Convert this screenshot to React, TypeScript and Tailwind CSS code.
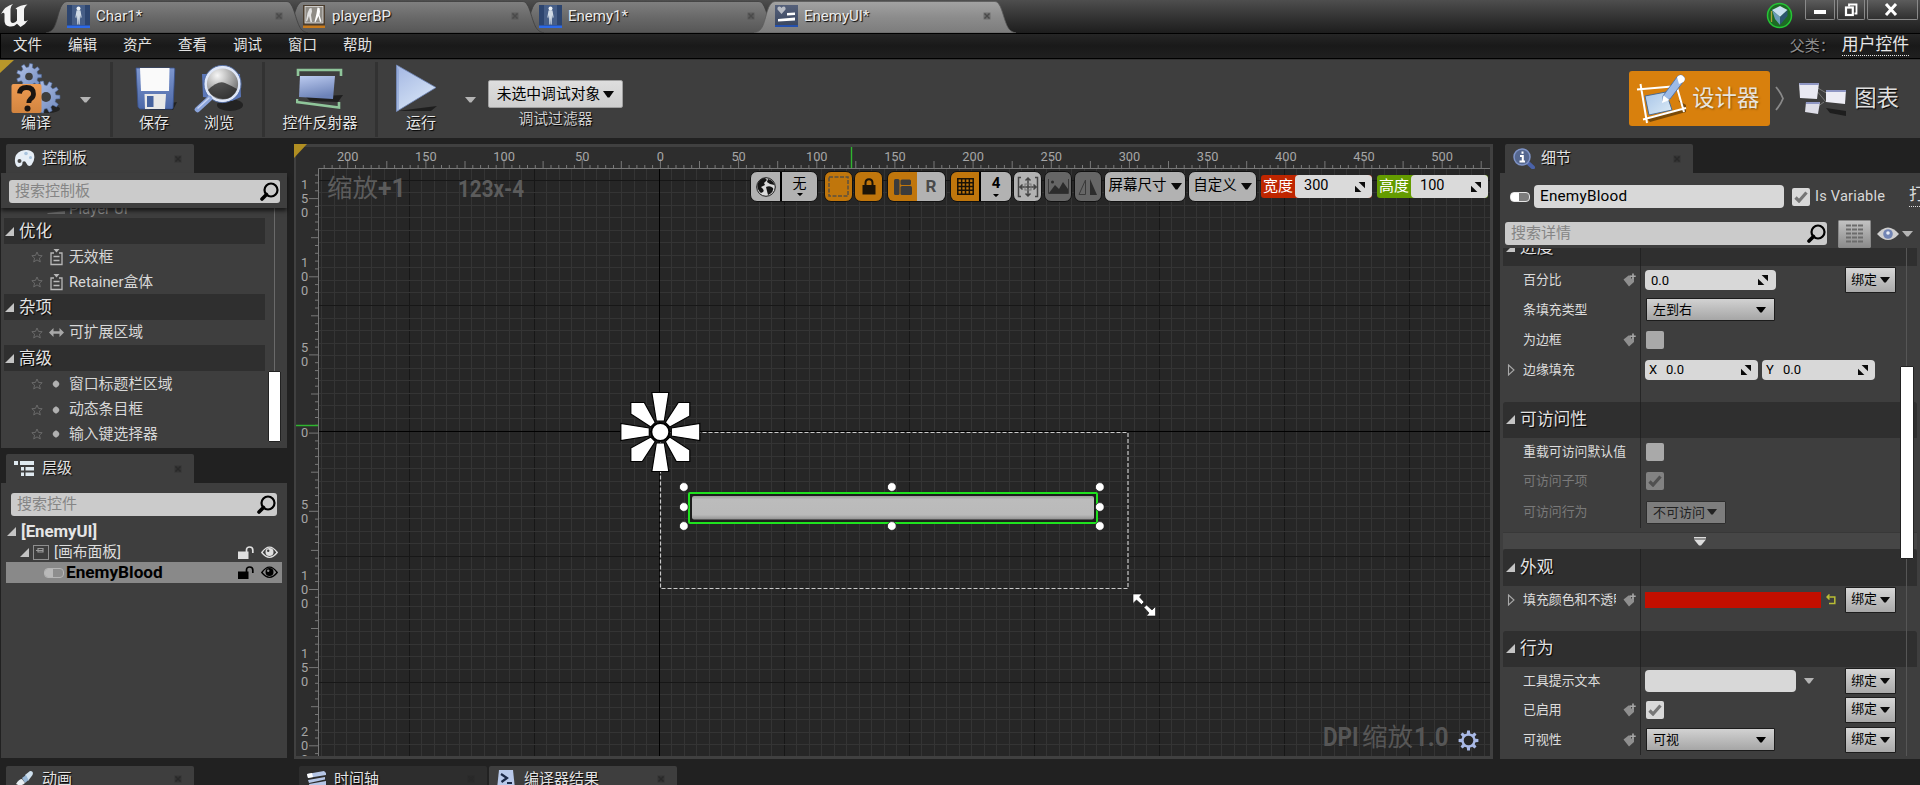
import type { ReactNode } from 'react';

const SHADOW = '[text-shadow:1px_1px_1px_#000]';

/* ---------- small shared pieces ---------- */

function Caret({ className = 'text-[#0a0a0a]', w = 10, h = 6 }: { className?: string; w?: number; h?: number }) {
  return (
    <svg width={w} height={h} viewBox="0 0 10 6" preserveAspectRatio="none" className={`shrink-0 ${className}`}>
      <path d="M0 0H10L5.8 5.6H4.2Z" fill="currentColor" />
    </svg>
  );
}

function Expanded({ size = 9 }: { size?: number }) {
  return (
    <svg width={size} height={size} viewBox="0 0 9 9" className="shrink-0">
      <path d="M9 0V9H0Z" fill="#c4c4c4" />
    </svg>
  );
}

function Collapsed() {
  return (
    <svg width="8" height="12" viewBox="0 0 8 12" className="shrink-0">
      <path d="M1.500 1L7 6L1.500 11Z" fill="none" stroke="#a8a8a8" strokeWidth="1.1" />
    </svg>
  );
}

function CloseX({ className = 'text-[#292929]' }: { className?: string }) {
  return (
    <svg width="8" height="8" viewBox="0 0 8 8" className={`shrink-0 ${className}`}>
      <rect x="0.5" y="0.5" width="7" height="7" fill="currentColor" opacity="0.45" />
      <path d="M1.5 1.5L6.5 6.5M6.5 1.5L1.5 6.5" stroke="currentColor" strokeWidth="1.4" />
    </svg>
  );
}

function SearchIcon() {
  return (
    <svg width="19" height="19" viewBox="0 0 19 19" className="shrink-0">
      <circle cx="11" cy="8" r="6.5" fill="none" stroke="#000" strokeWidth="2.2" />
      <path d="M6.5 12.5L2 17" stroke="#000" strokeWidth="3.6" strokeLinecap="round" />
    </svg>
  );
}

function SearchBox({ label, className }: { label: string; className: string }) {
  return (
    <div className={`flex h-[23px] items-center justify-between rounded-[3px] bg-[#cbcbcb] pl-[6px] pr-px ${className}`}>
      <span className="text-[15px] leading-none text-[#858585]">{label}</span>
      <SearchIcon />
    </div>
  );
}

function SpinIcon({ s = 11 }: { s?: number }) {
  return (
    <svg width={s} height={s} viewBox="0 0 11 11" className="shrink-0">
      <path d="M4 0H11V7Z" fill="#0a0a0a" />
      <path d="M0 4V11H7Z" fill="#0a0a0a" />
    </svg>
  );
}

function PanelTab({ icon, label, className = '' }: { icon: ReactNode; label: string; className?: string }) {
  return (
    <div className={`flex w-[188px] shrink-0 items-center rounded-t-[2px] pl-2 pr-3 ${className}`}>
      <div className="flex w-[28px] shrink-0 items-center">{icon}</div>
      <span className={`flex-1 text-[15px] leading-none text-[#e2e2e2] ${SHADOW}`}>{label}</span>
      <CloseX />
    </div>
  );
}

/* ---------- title bar ---------- */

function PersonIcon() {
  return (
    <svg width="23" height="23" viewBox="0 0 23 23">
      <rect width="23" height="23" fill="#2d456f" />
      <rect x="5" width="13" height="20" fill="#516a92" opacity="0.7" />
      <rect y="20.5" width="23" height="2.5" fill="#2c69e8" />
      <circle cx="11.5" cy="3.4" r="2" fill="#eef2f6" />
      <path d="M9.500 5.500Q11.500 4.600 13.500 5.500L14.600 12L13.800 13.500L13 10L12.700 19.500H11.800L11.500 13L11.200 19.500H10.300L10 10L9.200 13.500L8.400 12Z" fill="#cfd9e4" />
    </svg>
  );
}

function PlayerIcon() {
  return (
    <svg width="22" height="23" viewBox="0 0 22 23">
      <rect width="22" height="23" fill="#4a3d2e" />
      <rect x="2" y="1.500" width="18" height="16.500" fill="#8f8c86" stroke="#e4e4e4" strokeWidth="0.800" />
      <rect y="20.500" width="22" height="2.500" fill="#c77a1c" />
      <path d="M6.500 3.500L8.500 3L9 6.500L8 10L9 17H7.500L6 11L4 16.500L3 16L4.500 8Z" fill="#e2e2e2" />
      <path d="M14.500 2.500L16.500 3L17 6.500L16.500 10L18.500 16.500L17 17L15.500 11L12.500 17H11.500L13.500 8.500Z" fill="#fff" />
    </svg>
  );
}

function WidgetIcon() {
  return (
    <svg width="23" height="22" viewBox="0 0 23 22">
      <defs>
        <linearGradient id="wi" x1="0" y1="0" x2="0" y2="1">
          <stop offset="0" stopColor="#55607a" />
          <stop offset="1" stopColor="#39465f" />
        </linearGradient>
      </defs>
      <rect width="23" height="22" fill="url(#wi)" />
      <rect y="20" width="23" height="2" fill="#2450ad" />
      <path d="M6.500 9L2.500 4.500Q2 1.500 4.500 1.500Q6 1.500 6.500 3Q7 1.500 8.800 1.500Q11 1.800 10.500 4.500Z" fill="#b9bdc5" />
      <path d="M12 8L20 7.500V10L12 10.500Z" fill="#fff" />
      <path d="M3 14L20 12.500V15.500L3 16.500Z" fill="#fff" />
    </svg>
  );
}

function AppTab({ id, icon, label, active, z }: { id: string; icon: ReactNode; label: string; active?: boolean; z: string }) {
  return (
    <div className={`relative flex h-[33px] w-[236px] shrink-0 items-center ${z}`}>
      <svg width="262" height="33" viewBox="0 0 262 33" className="absolute left-0 top-0">
        <defs>
          <linearGradient id={id} x1="0" y1="0" x2="0" y2="1">
            <stop offset="0" stopColor={active ? '#a3a3a3' : '#808080'} />
            <stop offset="0.5" stopColor={active ? '#8c8c8c' : '#696969'} />
            <stop offset="1" stopColor={active ? '#7c7c7c' : '#565656'} />
          </linearGradient>
        </defs>
        <path
          d="M0 33C8 31 9 27 13 12Q16 1.500 21 1.500H241Q245 1.500 248 11C253 27 254 31 262 33Z"
          fill={`url(#${id})`}
          stroke={active ? '#5c5c5c' : '#3d3d3d'}
          strokeWidth="0.800"
        />
      </svg>
      <div className="relative flex w-full items-center pb-[1px] pl-[21px] pr-0">
        <div className="w-[29px] shrink-0">{icon}</div>
        <span className={`flex-1 whitespace-nowrap text-[15px] leading-none text-[#ececec] ${SHADOW}`}>{label}</span>
        <CloseX className="-mr-px text-[#4a4a4a]" />
      </div>
    </div>
  );
}

function TitleBar() {
  return (
    <div className="flex h-[33px] w-full bg-linear-to-b from-[#4e4e4e] to-[#1d1d1d]">
      <div className="w-[46px] shrink-0 pt-[2px]">
        <svg width="31" height="27" viewBox="0 0 31 27">
          <path
            d="M1 12Q5 4 13 2Q10.500 4 10.500 7V18Q10.500 21 13 21Q15.500 20.500 17 18.500V8Q17 6.500 15.500 6.500Q20 3 27.500 2.500Q24 5 24 8V18Q24 20.500 28 18Q25.500 22.500 20.500 25L17 21.800Q14 25.200 9.500 24.500Q4 23.500 4.500 18V12Q4 9.500 1 12Z"
            fill="#f4f4f4"
          />
        </svg>
      </div>
      <AppTab id="ta" icon={<PersonIcon />} label="Char1*" z="z-[3]" />
      <AppTab id="tb" icon={<PlayerIcon />} label="playerBP" z="z-[2]" />
      <AppTab id="tc" icon={<PersonIcon />} label="Enemy1*" z="z-[1]" />
      <AppTab id="td" icon={<WidgetIcon />} label="EnemyUI*" active z="z-[4]" />
      <div className="flex-1" />
      <svg width="27" height="27" viewBox="0 0 27 27" className="mr-3 mt-[2px]">
        <circle cx="13.500" cy="13.500" r="12" fill="#1d6a24" stroke="#25c535" strokeWidth="1.500" />
        <path d="M6 8L14 4L21.500 8L14 15Z" fill="#c9dff0" />
        <path d="M14 15L21.500 8V14L14 23Z" fill="#2d5470" />
        <path d="M6 8L14 15V23L9 17Z" fill="#6b9bb8" />
        <path d="M5.500 9V20" stroke="#a8a13a" strokeWidth="1.300" />
      </svg>
      <div className="flex h-5 gap-[2px] pr-[2px]">
        <div className="flex w-[30px] items-center justify-center rounded-b-[2px] border border-t-0 border-[#8a8a8a] bg-linear-to-b from-[#5c5c5c] to-[#303030]">
          <div className="mt-1 h-1 w-3 bg-white" />
        </div>
        <div className="flex w-[28px] items-center justify-center rounded-b-[2px] border border-t-0 border-[#8a8a8a] bg-linear-to-b from-[#5c5c5c] to-[#303030]">
          <svg width="14" height="14" viewBox="0 0 14 14">
            <path d="M5 3.500V1.500H12.500V10.500H10.500" fill="none" stroke="#fff" strokeWidth="1.800" />
            <rect x="2" y="4.500" width="6.800" height="7.500" fill="none" stroke="#fff" strokeWidth="2.200" />
          </svg>
        </div>
        <div className="flex w-[51px] items-center justify-center rounded-b-[2px] border border-t-0 border-[#8a8a8a] bg-linear-to-b from-[#5c5c5c] to-[#303030] pr-1">
          <svg width="14" height="13" viewBox="0 0 14 13">
            <path d="M2 1L12 12M12 1L2 12" stroke="#fff" strokeWidth="3" />
          </svg>
        </div>
      </div>
    </div>
  );
}

function MenuBar() {
  const items = ['文件', '编辑', '资产', '查看', '调试', '窗口', '帮助'];
  return (
    <div className="flex h-[26px] items-center border-y border-l border-black bg-linear-to-b from-[#262626] via-[#191919] to-[#1f1f1f] pl-[12px] pr-[11px]">
      <div className="flex flex-1 gap-[25.5px] pt-px">
        {items.map((m) => (
          <span key={m} className="w-[29.5px] whitespace-nowrap text-[14.5px] leading-none text-[#e4e4e4]">{m}</span>
        ))}
      </div>
      <span className={`text-[15px] leading-none text-[#8c8c8c] ${SHADOW}`}>父类：</span>
      <span className="ml-[7px] border-b border-dotted border-[#e8e8e8] pb-[2px] text-[16.8px] leading-none text-[#e8e8e8]">用户控件</span>
    </div>
  );
}

/* ---------- toolbar ---------- */

function gearPath(cx: number, cy: number, ro: number, ri: number, n: number) {
  let d = '';
  for (let i = 0; i < n; i++) {
    const a = (i / n) * Math.PI * 2;
    const s = (Math.PI * 2) / n;
    const pts: [number, number][] = [
      [a - s * 0.3, ri],
      [a - s * 0.18, ro],
      [a + s * 0.18, ro],
      [a + s * 0.3, ri],
    ];
    pts.forEach(([t, r], k) => {
      d += `${i === 0 && k === 0 ? 'M' : 'L'}${(cx + Math.cos(t) * r).toFixed(2)} ${(cy + Math.sin(t) * r).toFixed(2)}`;
    });
  }
  return d + 'Z';
}

function CompileIcon() {
  return (
    <svg width="50" height="51" viewBox="0 0 50 51">
      <defs>
        <linearGradient id="cg" x1="0" y1="0" x2="1" y2="1">
          <stop offset="0" stopColor="#b4c4ea" />
          <stop offset="1" stopColor="#7089bd" />
        </linearGradient>
        <linearGradient id="co" x1="0" y1="0" x2="0" y2="1">
          <stop offset="0" stopColor="#ee9b52" />
          <stop offset="1" stopColor="#d2843f" />
        </linearGradient>
      </defs>
      <ellipse cx="37" cy="46" rx="12" ry="4" fill="#222" />
      <path d={gearPath(18, 13, 12.5, 9, 9)} fill="url(#cg)" stroke="#5470a6" strokeWidth="0.600" />
      <circle cx="18" cy="13.500" r="3.800" fill="#3e3e3e" />
      <path d={gearPath(33, 34, 16, 12, 11)} fill="url(#cg)" stroke="#5470a6" strokeWidth="0.600" />
      <circle cx="35" cy="34" r="5" fill="#3e3e3e" />
      <rect x="0.500" y="21" width="30" height="29" rx="2" fill="url(#co)" />
      <path d="M8.500 30.500Q9 24.500 15.500 24.500Q22.500 24.500 22.500 31Q22.500 34 19.500 36Q17.800 37.500 17.800 40" fill="none" stroke="#1b1410" strokeWidth="4.800" />
      <circle cx="16.500" cy="45.500" r="3" fill="#1b1410" />
    </svg>
  );
}

function SaveIcon() {
  return (
    <svg width="44" height="46" viewBox="0 0 44 46">
      <defs>
        <linearGradient id="sg" x1="0" y1="0" x2="0" y2="1">
          <stop offset="0" stopColor="#7e97cf" />
          <stop offset="1" stopColor="#4c68a8" />
        </linearGradient>
      </defs>
      <path d="M20 40L42 36L38 44H14Z" fill="#222" />
      <path d="M1 2H39Q40 2 39.800 4L38 42Q38 43 36.500 43H5L3 41Z" fill="url(#sg)" stroke="#39528c" strokeWidth="0.800" />
      <path d="M5 2H34.500L34 25H6Z" fill="#fafafa" />
      <path d="M9.500 28H31L30 43H10Z" fill="#e8e8e8" />
      <rect x="12" y="30" width="6.500" height="11" fill="#46639f" />
    </svg>
  );
}

function BrowseIcon() {
  return (
    <svg width="50" height="48" viewBox="0 0 50 48">
      <defs>
        <radialGradient id="bg1" cx="0.35" cy="0.25" r="0.9">
          <stop offset="0" stopColor="#f6f6f6" />
          <stop offset="0.55" stopColor="#9b9b9b" />
          <stop offset="1" stopColor="#4c4c4c" />
        </radialGradient>
      </defs>
      <ellipse cx="36" cy="40" rx="13" ry="6" fill="#232323" />
      <path d="M8 9H46L47 32L38 36L9 32Z" fill="#5a76b8" />
      <circle cx="28.500" cy="19" r="17" fill="url(#bg1)" stroke="#dfe7f8" strokeWidth="2.800" />
      <path d="M14 25Q24 15 31 18T43 24Q39 34 29 34Q18 33 14 25Z" fill="#1c1c1c" opacity="0.700" />
      <circle cx="28.500" cy="19" r="18.600" fill="none" stroke="#536ea6" strokeWidth="0.900" />
      <path d="M15.500 33.500L3.500 44.500" stroke="#8aa3da" strokeWidth="5.500" strokeLinecap="round" />
      <path d="M15 33L4 43" stroke="#c7d4f2" strokeWidth="1.500" strokeLinecap="round" />
    </svg>
  );
}

function ReflectorIcon() {
  return (
    <svg width="48" height="42" viewBox="0 0 48 42">
      <defs>
        <linearGradient id="rg" x1="0" y1="0" x2="0.300" y2="1">
          <stop offset="0" stopColor="#bccbf0" />
          <stop offset="1" stopColor="#6d83b8" />
        </linearGradient>
      </defs>
      <path d="M10 29L47 27L42 34L14 33Z" fill="#1f1f1f" />
      <path d="M2 8V2H45V8" fill="none" stroke="#8fc59a" strokeWidth="2.600" />
      <path d="M4 8H39L37 31L3 29Z" fill="url(#rg)" />
      <path d="M1 31V34L43 39.500V34" fill="none" stroke="#8fc59a" strokeWidth="2.600" />
    </svg>
  );
}

function PlayIcon() {
  return (
    <svg width="44" height="50" viewBox="0 0 44 50">
      <defs>
        <linearGradient id="pg" x1="0" y1="0" x2="0.600" y2="1">
          <stop offset="0" stopColor="#a3b6e2" />
          <stop offset="1" stopColor="#d6e4f6" />
        </linearGradient>
      </defs>
      <path d="M2 47L42 42L36 47Z" fill="#1e1e1e" />
      <path d="M1.500 1L41 23.500L1.500 47.500Z" fill="url(#pg)" stroke="#6d84b5" strokeWidth="0.800" />
      <path d="M1.500 1V47.500L4 46V6Z" fill="#8098cc" opacity="0.500" />
    </svg>
  );
}

function DesignerIcon() {
  return (
    <svg width="51" height="50" viewBox="0 0 51 50">
      <defs>
        <linearGradient id="dg" x1="0" y1="0" x2="1" y2="1">
          <stop offset="0" stopColor="#a7c4e8" />
          <stop offset="1" stopColor="#dcebf6" />
        </linearGradient>
      </defs>
      <path d="M10 44L48 34L42 26L50 31V38L14 48Z" fill="#7a4a08" />
      <path d="M9 22L30 18L36 36L13 41Z" fill="url(#dg)" stroke="#3d6391" strokeWidth="0.900" />
      <path d="M1 15.500L36 12.500M4.500 10L11 49M40 10L48 38M7 45.500L50 34" stroke="#fff" strokeWidth="2" fill="none" />
      <path d="M27 22L41 3Q45 -1 48 3Q50 5 47 8L34 25L27 27Z" fill="#9dbbe8" stroke="#4d70a8" strokeWidth="0.900" />
      <path d="M41 3Q45 -1 48 3Q50 5 47.500 8L43 10Z" fill="#fff" />
      <path d="M26 29L27.500 21.500L33.500 26Z" fill="#fff" />
    </svg>
  );
}

function GraphIcon() {
  return (
    <svg width="49" height="34" viewBox="0 0 49 34">
      <path d="M28 26L48 29V34L32 31Z" fill="#1e1e1e" />
      <path d="M18 5L30 12M26 20L16 27M18 8L28 20" stroke="#777" strokeWidth="1" />
      <path d="M1 1L21 1L19 17L2 16Z" fill="#e9e9f2" />
      <path d="M1 1L21 1L20.700 3L1.500 3Z" fill="#8f97c4" />
      <path d="M28 8L48 8L47 22L28 20Z" fill="#ececf4" />
      <path d="M28 8L48 8L48 10L28 10Z" fill="#8f97c4" />
      <path d="M8 20L22 20L20 32L7 30Z" fill="#dedee8" />
      <path d="M8 20L22 20L21.500 22L8 22Z" fill="#8f97c4" />
    </svg>
  );
}

function ToolButton({ icon, label, className }: { icon: ReactNode; label: string; className: string }) {
  return (
    <div className={`flex shrink-0 flex-col items-center ${className}`}>
      <div className="flex h-[53px] items-center justify-center">{icon}</div>
      <span className={`-mt-px whitespace-nowrap text-[15px] leading-[19px] text-[#e6e6e6] ${SHADOW}`}>{label}</span>
    </div>
  );
}

function ToolSeparator() {
  return <div className="h-[75px] w-[3px] shrink-0 self-start bg-[#323232]" />;
}

function Toolbar() {
  return (
    <div className="relative flex h-[79px] border-t border-[#333] bg-[#3e3e3e] pt-[2px]">
      <svg width="14" height="13" viewBox="0 0 14 13" className="absolute left-0 top-0">
        <path d="M0 0H14L0 13Z" fill="#b8972a" />
      </svg>
      <ToolButton icon={<CompileIcon />} label="编译" className="ml-[11px] w-[50px] items-start [&>span]:ml-[10px]" />
      <div className="w-[49px] shrink-0 pl-[19px] pt-[35px]">
        <Caret className="text-[#b4b4b4]" w={11} h={6} />
      </div>
      <ToolSeparator />
      <ToolButton icon={<SaveIcon />} label="保存" className="ml-[22px] w-[44px] [&>span]:-ml-[6px]" />
      <ToolButton icon={<BrowseIcon />} label="浏览" className="ml-[15px] w-[50px]" />
      <div className="w-[18px]" />
      <ToolSeparator />
      <ToolButton icon={<ReflectorIcon />} label="控件反射器" className="ml-[15px] w-[80px]" />
      <div className="w-[15px]" />
      <ToolSeparator />
      <ToolButton icon={<PlayIcon />} label="运行" className="ml-[18px] w-[50px] [&>div]:mr-[9px]" />
      <div className="w-[42px] shrink-0 pl-[19px] pt-[35px]">
        <Caret className="text-[#b4b4b4]" w={11} h={6} />
      </div>
      <div className="flex shrink-0 flex-col items-center pt-[18px]">
        <div className="flex h-[28px] w-[135px] items-center justify-center gap-[3px] rounded-[2px] border border-[#a0a0a0] bg-linear-to-b from-[#dedede] to-[#cfcfcf]">
          <span className="text-[14.8px] leading-none text-black">未选中调试对象</span>
          <Caret w={11} h={7} />
        </div>
        <span className="mt-[4px] text-[14.8px] leading-none text-[#cfcfcf] [text-shadow:1px_1px_1px_#000]">调试过滤器</span>
      </div>
      <div className="flex-1" />
      <div className="mt-[9px] flex h-[55px] w-[141px] items-center rounded-[3px] bg-[#d8800d] pl-[7px] [text-shadow:1px_1px_2px_#8a5208]">
        <DesignerIcon />
        <span className="ml-[5px] text-[22.4px] leading-none text-[#e8e4de]">设计器</span>
      </div>
      <svg width="10" height="25" viewBox="0 0 10 25" className="ml-[5px] mt-[24px]">
        <path d="M1 1Q6 7 8 12.500Q6 18 1 24" fill="none" stroke="#8a8a8a" strokeWidth="1.800" />
      </svg>
      <div className="mr-[21px] mt-[9px] flex h-[55px] items-center pl-[13px]">
        <GraphIcon />
        <span className={`ml-[7px] text-[22.4px] leading-none text-[#dedede] ${SHADOW}`}>图表</span>
      </div>
    </div>
  );
}

/* ---------- left column ---------- */

function PaletteHeader({ label, className }: { label: string; className: string }) {
  return (
    <div className={`flex w-[261px] shrink-0 items-center gap-[5px] bg-[#2f2f2f] pl-px ${className}`}>
      <Expanded />
      <span className={`pt-[2px] text-[16.5px] leading-none text-[#e2e2e2] ${SHADOW}`}>{label}</span>
    </div>
  );
}

function Star() {
  return (
    <svg width="12" height="12" viewBox="0 0 12 12" className="shrink-0">
      <path d="M6 1L7.500 4.400L11.200 4.700L8.400 7.200L9.300 10.900L6 8.900L2.700 10.900L3.600 7.200L0.800 4.700L4.500 4.400Z" fill="none" stroke="#6e6e6e" strokeWidth="0.900" />
    </svg>
  );
}

function PaletteRow({ icon, label, className }: { icon: ReactNode; label: string; className: string }) {
  return (
    <div className={`flex shrink-0 items-center pl-[27px] ${className}`}>
      <Star />
      <div className="flex w-[26px] shrink-0 justify-center">{icon}</div>
      <span className="text-[14.8px] leading-none text-[#d8d8d8]">{label}</span>
    </div>
  );
}

function BoxIcon() {
  return (
    <svg width="13" height="17" viewBox="0 0 13 17">
      <path d="M3.500 0H9.500L6.500 3.500Z" fill="#b8b8b8" />
      <path d="M4 4H1V15.500H12V4H9M3.500 7.500H9.500M3.500 11.500H9.500" fill="none" stroke="#b8b8b8" strokeWidth="1.300" />
    </svg>
  );
}

function SpacerIcon() {
  return (
    <svg width="15" height="9" viewBox="0 0 15 9" className="shrink-0">
      <path d="M0 4.500L4.500 0V3.300H10.500V0L15 4.500L10.500 9V5.700H4.500V9Z" fill="#a8a8a8" />
    </svg>
  );
}

function Dot() {
  return (
    <svg width="8" height="8" viewBox="0 0 8 8">
      <path d="M4 0L7.600 4L4 8L0.400 4Z" fill="#b0b0b0" />
      <circle cx="4" cy="4" r="3" fill="#b0b0b0" />
    </svg>
  );
}

function Lock({ color }: { color: string }) {
  return (
    <svg width="16" height="13" viewBox="0 0 16 13" className="shrink-0">
      <rect x="0" y="5.500" width="10.500" height="7.500" fill={color} />
      <path d="M8.500 6V4Q8.500 1 11.700 1Q14.800 1 14.800 4V7" fill="none" stroke={color} strokeWidth="1.700" />
    </svg>
  );
}

function Eye({ color, hole }: { color: string; hole: string }) {
  return (
    <svg width="17" height="13" viewBox="0 0 17 13" className="shrink-0">
      <path d="M0.800 6.500Q8.500 -4.200 16.200 6.500Q8.500 16.200 0.800 6.500Z" fill="none" stroke={color} strokeWidth="1.400" />
      <circle cx="8.500" cy="6" r="4" fill={color} />
      <circle cx="7.200" cy="4.700" r="1.200" fill={hole} />
    </svg>
  );
}

function LeftColumn() {
  return (
    <div className="flex w-[286px] shrink-0 flex-col">
      {/* palette */}
      <div className="flex h-[29px] pl-[5px]">
        <PanelTab
          label="控制板"
          className="bg-[#3e3e3e]"
          icon={
            <svg width="21" height="19" viewBox="0 0 21 19">
              <path d="M1 13Q0 5 7 2Q15 -1 19.500 4Q22 10 17.500 16Q14 18.500 12.500 14.500Q11 11 8.500 13Q9 18 4 18Q1.500 17 1 13Z" fill="#e6eef6" />
              <circle cx="12" cy="4.500" r="1.800" fill="#a9c4de" />
              <circle cx="16.500" cy="8.500" r="1.500" fill="#a9c4de" />
              <circle cx="5.500" cy="12" r="2" fill="#4a4a4a" />
            </svg>
          }
        />
      </div>
      <div className="flex h-[275px] shrink-0 flex-col bg-[#3e3e3e]">
        <div className="z-[1] h-[35px] shrink-0 bg-[#3e3e3e] pl-2 pt-[7px] shadow-[0_3px_4px_rgba(0,0,0,0.6)]">
          <SearchBox label="搜索控制板" className="w-[271px]" />
        </div>
        <div className="flex flex-1 overflow-hidden pl-[3px]">
          <div className="flex w-[263px] flex-col">
            <div className="flex h-[10px] items-end overflow-hidden pl-[42px]">
              <svg width="20" height="8" viewBox="0 0 20 8" className="mb-[2px] shrink-0">
                <path d="M2 5L19 3V6H1Z" fill="#6a6a6a" />
              </svg>
              <span className="mb-px ml-[3px] text-[15px] leading-[15px] text-[#8a8a8a]">Player UI</span>
            </div>
            <PaletteHeader label="优化" className="h-[26px]" />
            <PaletteRow icon={<BoxIcon />} label="无效框" className="h-[26px]" />
            <PaletteRow icon={<BoxIcon />} label="Retainer盒体" className="h-[24px]" />
            <PaletteHeader label="杂项" className="h-[26px]" />
            <PaletteRow icon={<SpacerIcon />} label="可扩展区域" className="h-[25px]" />
            <PaletteHeader label="高级" className="h-[26px]" />
            <PaletteRow icon={<Dot />} label="窗口标题栏区域" className="h-[26px]" />
            <PaletteRow icon={<Dot />} label="动态条目框" className="h-[25px]" />
            <PaletteRow icon={<Dot />} label="输入键选择器" className="h-[24px]" />
          </div>
          <div className="flex w-[15px] flex-col items-center">
            <div className="h-[163px] w-px bg-[#6a6a6a]" />
            <div className="h-[71px] w-[13px] shrink-0 rounded-[1px] border border-[#222] bg-white" />
          </div>
        </div>
      </div>
      {/* hierarchy */}
      <div className="mt-[6px] flex h-[29px] shrink-0 pl-[5px]">
        <PanelTab
          label="层级"
          className="bg-[#3e3e3e]"
          icon={
            <svg width="21" height="17" viewBox="0 0 21 17">
              <path d="M0 1H4V5H0ZM6 1H20V5H6ZM7 7H10V10.500H7ZM11.500 7H20V10.500H11.500ZM7 12.500H10V16H7ZM11.500 12.500H20V16H11.500Z" fill="#dfe9ef" />
            </svg>
          }
        />
      </div>
      <div className="flex h-[275px] shrink-0 flex-col bg-[#3e3e3e] pt-[10px]">
        <SearchBox label="搜索控件" className="ml-[10px] w-[266px]" />
        <div className="mt-[3px] flex h-[24px] items-center gap-[5px] pl-[6px]">
          <Expanded />
          <span className="pt-px text-[16.8px] font-bold leading-none text-[#e6e6e6]">[EnemyUI]</span>
        </div>
        <div className="flex h-[19px] items-center pl-[19px] pr-[9px] pb-px">
          <Expanded />
          <svg width="16" height="15" viewBox="0 0 16 15" className="ml-[4px]">
            <rect x="0.500" y="0.500" width="15" height="14" fill="none" stroke="#8f8f8f" />
            <path d="M3 5.500H10M5 3.500H10V7H5Z" fill="none" stroke="#9a9a9a" strokeWidth="1.200" />
          </svg>
          <span className="ml-[5px] flex-1 text-[14.8px] leading-none text-[#dedede]">[画布面板]</span>
          <Lock color="#e0e0e0" />
          <div className="w-[7px]" />
          <Eye color="#e0e0e0" hole="#3e3e3e" />
        </div>
        <div className="ml-[5px] flex h-[21px] w-[276px] items-center bg-[#898989] pl-[38px] pr-[4px]">
          <div className="h-[10px] w-5 shrink-0 rounded-[4px] border border-[#b5b5b5] bg-[#8e8e8e]">
            <div className="h-full w-2 rounded-l-[3px] bg-[#b9b9b9]" />
          </div>
          <span className="ml-[2px] flex-1 text-[17.2px] font-bold leading-none text-black">EnemyBlood</span>
          <Lock color="#000" />
          <div className="w-[7px]" />
          <Eye color="#000" hole="#898989" />
        </div>
      </div>
      <div className="mt-2 flex h-[19px] shrink-0 overflow-hidden pl-[5px]">
        <PanelTab
          label="动画"
          className="h-[26px] bg-[#3e3e3e]"
          icon={
            <svg width="21" height="18" viewBox="0 0 21 18">
              <path d="M11 5L16 1Q20 1 18.500 5L14 11Z" fill="#cfe0ee" />
              <path d="M8 8L12 5L14.500 10L11 13Z" fill="#98b7d6" />
              <path d="M2 14Q5 9 8 9L11 13Q7 17 2 14Z" fill="#e8eef2" />
            </svg>
          }
        />
      </div>
    </div>
  );
}

/* ---------- designer canvas ---------- */

const OX = 660.4;
const OY = 433.1;
const U = 1.5635;

const VERT_LABELS: [string, number, number][] = [];
for (let k = -3; k <= 4; k++) {
  const s = String(Math.abs(k) * 50);
  const c = OY - 0.3 + k * 50 * U;
  [...s].forEach((ch, i) => VERT_LABELS.push([ch, c + (i - (s.length - 1) / 2) * 14, k]));
}

function Rulers() {
  const top: ReactNode[] = [];
  for (let u = -215; u <= 530; u += 5) {
    const x = OX + u * U;
    if (x < 320 || x > 1489) continue;
    const len = u % 50 === 0 ? 9 : u % 25 === 0 ? 7 : 3;
    top.push(<path key={`t${u}`} d={`M${x.toFixed(1)} 168V${168 - len}`} />);
  }
  const left: ReactNode[] = [];
  for (let u = -165; u <= 205; u += 5) {
    const y = OY + u * U;
    if (y < 170 || y > 755) continue;
    const len = u % 50 === 0 ? 9 : u % 25 === 0 ? 7 : 3;
    left.push(<path key={`l${u}`} d={`M318 ${y.toFixed(1)}H${318 - len}`} />);
  }
  const labels: ReactNode[] = [];
  for (let k = -4; k <= 10; k++) {
    labels.push(
      <text key={k} x={OX + k * 50 * U} y="160.500" textAnchor="middle">
        {Math.abs(k) * 50}
      </text>,
    );
  }
  return (
    <>
      <g stroke="#787878" strokeWidth="1" fill="none">
        {top}
        {left}
        <path d="M318.500 756V168.500H1490" />
      </g>
      <g fill="#a6a6a6" fontSize="12.800">
        {labels}
        {VERT_LABELS.map(([ch, y], i) => (
          <text key={i} x="304.500" y={y + 4.6} textAnchor="middle">
            {ch}
          </text>
        ))}
      </g>
      <path d="M851.500 147V168M296 425.500H318" stroke="#2fb52f" strokeWidth="1.400" />
    </>
  );
}

function Grid() {
  const lines: ReactNode[] = [];
  for (let i = -27; i <= 66; i++) {
    const x = Math.floor(659 + i * 12.5) + 0.5;
    if (x < 320 || x > 1489) continue;
    lines.push(<path key={`x${i}`} d={`M${x} 169V756`} stroke={i % 10 === 0 ? '#171717' : '#343434'} />);
  }
  for (let i = -20; i <= 25; i++) {
    const y = Math.floor(431 + i * 12.55) + 0.5;
    if (y < 170 || y > 755) continue;
    lines.push(<path key={`y${i}`} d={`M319 ${y}H1490`} stroke={i % 10 === 0 ? '#171717' : '#343434'} />);
  }
  return (
    <g strokeWidth="1">
      {lines}
      <path d="M659.500 169V756M319 431.500H1490" stroke="#000" strokeWidth="1" />
    </g>
  );
}

const HANDLES: [number, number][] = [
  [683.8, 487], [891.8, 487], [1099.8, 487],
  [683.8, 507], [1099.8, 507],
  [683.8, 526], [891.8, 526], [1099.8, 526],
];

function Anchor() {
  const straight = 'M-8.500 -39.500H8.500L4 -11H-4Z';
  const diagonal = 'M-29.500 -29.500H-16L-5 -9.500L-9.500 -5L-29.500 -18Z';
  return (
    <g transform="translate(660.300 432)" fill="#fff" stroke="#000" strokeWidth="1.200">
      {[0, 90, 180, 270].map((r) => (
        <path key={r} d={straight} transform={`rotate(${r})`} />
      ))}
      {[0, 90, 180, 270].map((r) => (
        <path key={`d${r}`} d={diagonal} transform={`rotate(${r})`} />
      ))}
      <circle r="9" strokeWidth="2" />
    </g>
  );
}

function Chip({ className, children }: { className: string; children: ReactNode }) {
  return (
    <div className={`flex h-[31px] shrink-0 items-center justify-center rounded-[7px] border border-[#111] ${className}`}>
      {children}
    </div>
  );
}

function SizeField({ label, value, color, fieldWidth }: { label: string; value: string; color: string; fieldWidth: string }) {
  return (
    <div className={`flex h-[23px] rounded-[3px] ${color}`}>
      <span className="flex w-[34px] items-center justify-center text-[15px] leading-none text-white">{label}</span>
      <div className={`flex items-center justify-between rounded-[4px] bg-[#dadada] pl-[9px] pr-[7px] ${fieldWidth}`}>
        <span className="text-[14.5px] leading-none text-black">{value}</span>
        <SpinIcon s={10} />
      </div>
    </div>
  );
}

function CanvasToolbar() {
  return (
    <div className="absolute left-[456px] top-[27px] flex h-[31px] items-center">
      <div className="flex h-[31px] overflow-hidden rounded-[7px] border border-[#111] bg-[#b2b2b2]">
        <div className="flex w-[31px] items-center justify-center border-r-2 border-black">
          <svg width="20" height="20" viewBox="0 0 20 20">
            <circle cx="10" cy="10" r="9.300" fill="#dadada" stroke="#161616" strokeWidth="1" />
            <path d="M2 6Q5 1 9 1L11 3L8 6L9 8L5 10L7 12Q9 15 5 16Q0 12 2 6ZM12 2Q17 3 18.500 8L14 7L11 5ZM10 10Q14 8 17 11Q18 14 14 17L12 18L11 14Z" fill="#161616" />
          </svg>
        </div>
        <div className="flex w-[35px] flex-col items-center pt-[4px]">
          <span className="text-[14px] leading-none text-black">无</span>
          <Caret w={6} h={3} className="mt-[3px] text-black" />
        </div>
      </div>
      <Chip className="ml-[6px] w-[29px] bg-[#c0760c]">
        <svg width="21" height="21" viewBox="0 0 21 21">
          <rect x="1" y="1" width="19" height="19" fill="none" stroke="#5a5040" strokeWidth="1.500" strokeDasharray="4 1.500" />
        </svg>
      </Chip>
      <Chip className="ml-px w-[29px] bg-[#c0760c]">
        <svg width="14" height="17" viewBox="0 0 14 17">
          <rect x="0.500" y="7" width="13" height="9.500" fill="#1c1408" />
          <path d="M3.500 8V5Q3.500 1.200 7 1.200T10.500 5V8" fill="none" stroke="#1c1408" strokeWidth="2" />
        </svg>
      </Chip>
      <div className="ml-[4px] flex h-[31px] overflow-hidden rounded-[7px] border border-[#111]">
        <div className="flex w-[29px] items-center justify-center bg-[#c0760c]">
          <svg width="18" height="16" viewBox="0 0 18 16">
            <rect x="0" y="0" width="5.500" height="16" rx="1.500" fill="#3c3c3c" />
            <rect x="6.500" y="0.500" width="10.500" height="5.500" rx="1.500" fill="#3c3c3c" />
            <rect x="6.500" y="7" width="11.500" height="9" rx="1.500" fill="#3c3c3c" />
          </svg>
        </div>
        <div className="flex w-[28px] items-center justify-center bg-[#b2b2b2] text-[17px] font-bold leading-none text-[#4a4a4a]">R</div>
      </div>
      <div className="ml-[4px] flex h-[31px] overflow-hidden rounded-[7px] border border-[#111]">
        <div className="flex w-[30px] items-center justify-center border-r-2 border-black bg-[#c0760c]">
          <svg width="17" height="17" viewBox="0 0 17 17">
            <path d="M0.800 0V17M4.650 0V17M8.500 0V17M12.350 0V17M16.200 0V17M0 0.800H17M0 4.650H17M0 8.500H17M0 12.350H17M0 16.200H17" stroke="#1a1206" strokeWidth="1.500" />
          </svg>
        </div>
        <div className="flex w-[30px] flex-col items-center bg-[#b2b2b2] pt-[4px]">
          <span className="text-[15px] font-bold leading-none text-black">4</span>
          <Caret w={6} h={3} className="mt-[3px] text-black" />
        </div>
      </div>
      <Chip className="ml-px w-[29px] bg-[#b2b2b2]">
        <svg width="22" height="22" viewBox="0 0 22 22">
          <path d="M4 1.500H1.500V20.500H4M18 1.500H20.500V20.500H18M11 2V20M3 11H19M8.500 4.500L11 2L13.500 4.500M8.500 17.500L11 20L13.500 17.500M5.500 8.500L3 11L5.500 13.500M16.500 8.500L19 11L16.500 13.500" fill="none" stroke="#444" strokeWidth="1.500" />
          <rect x="8" y="8" width="6" height="6" fill="none" stroke="#777" strokeWidth="1" />
        </svg>
      </Chip>
      <Chip className="ml-[2px] w-[28px] bg-[#666]">
        <svg width="21" height="15" viewBox="0 0 21 15">
          <path d="M0.500 0V14.500H20.500V0" fill="none" stroke="#3a3a3a" strokeWidth="1" />
          <path d="M1 14L7 6L11 10L15 3L20 10V14.500H1Z" fill="#2c2c2c" />
          <circle cx="4.500" cy="3" r="1.500" fill="#2c2c2c" />
        </svg>
      </Chip>
      <Chip className="ml-[2px] w-[28px] bg-[#666]">
        <svg width="20" height="18" viewBox="0 0 20 18">
          <path d="M7.500 2V16.500H1Z" fill="none" stroke="#3a3a3a" strokeWidth="1" />
          <path d="M12 1L19 17H12Z" fill="#2c2c2c" />
        </svg>
      </Chip>
      <Chip className="ml-[2px] w-[82px] gap-[4px] bg-[#b2b2b2]">
        <span className="text-[14.5px] leading-none text-black">屏幕尺寸</span>
        <Caret w={11} h={7} />
      </Chip>
      <Chip className="ml-[2px] w-[69px] gap-[4px] bg-[#b2b2b2]">
        <span className="text-[14.5px] leading-none text-black">自定义</span>
        <Caret w={11} h={7} />
      </Chip>
      <div className="ml-[4px] flex gap-[5px]">
        <SizeField label="宽度" value="300" color="bg-[#bf2600]" fieldWidth="w-[77px]" />
        <SizeField label="高度" value="100" color="bg-[#649c00]" fieldWidth="w-[77px]" />
      </div>
    </div>
  );
}

function Designer() {
  return (
    <div className="flex w-[1199px] shrink-0 flex-col">
      <div className="relative h-[615px] shrink-0 overflow-hidden">
        <svg width="1199" height="615" viewBox="294 144 1199 615" className="block">
          <defs>
            <clipPath id="area">
              <rect x="296" y="146" width="1194" height="610" />
            </clipPath>
            <linearGradient id="bar" x1="0" y1="0" x2="0" y2="1">
              <stop offset="0" stopColor="#9c9c9c" />
              <stop offset="0.150" stopColor="#bcbcbc" />
              <stop offset="0.800" stopColor="#bababa" />
              <stop offset="1" stopColor="#929292" />
            </linearGradient>
          </defs>
          <rect x="294" y="144" width="1199" height="615" fill="#404040" />
          <rect x="296" y="147" width="1194" height="609" fill="#2d2d2d" />
          <rect x="319" y="169" width="1171" height="587" fill="#262626" />
          <g clipPath="url(#area)">
            <Grid />
            <Rulers />
          </g>
          <path d="M294 144H307L294 158Z" fill="#b08e22" />
          <rect x="660.500" y="432.500" width="467.500" height="156" fill="none" stroke="#c9c9c9" strokeWidth="1.200" strokeDasharray="4 2" />
          <Anchor />
          <rect x="690" y="494" width="406" height="28" fill="#1d1d1d" />
          <rect x="692" y="496" width="402" height="23.500" rx="2" fill="url(#bar)" />
          <rect x="689" y="493" width="408" height="30" rx="1" fill="none" stroke="#1fe21f" strokeWidth="2" />
          {HANDLES.map(([x, y], i) => (
            <circle key={i} cx={x} cy={y} r="4.400" fill="#fff" stroke="#111" strokeWidth="0.700" />
          ))}
          <g fill="#fff" stroke="#111" strokeWidth="0.600">
            <path d="M1133 594H1142L1139.500 597L1144 602L1141.500 604.500L1136.500 600L1133 603.500Z" />
            <path d="M1155.500 616H1146.500L1149 613L1144 607.500L1146.500 605L1152 610L1155.500 606.500Z" />
          </g>
        </svg>
        <CanvasToolbar />
        <div className="absolute left-[33px] top-[32px] flex h-[26px] items-center text-[#5c5c5c]">
          <span className="whitespace-nowrap text-[25.5px] leading-none">
            缩放<b className="inline-block origin-left scale-x-[0.97]">+1</b>
          </span>
        </div>
        <div className="absolute left-[164px] top-[32px] flex h-[26px] items-center text-[#5c5c5c]">
          <b className="inline-block origin-left scale-x-[0.86] whitespace-nowrap text-[24px] leading-none">123x-4</b>
        </div>
        <div className="absolute right-[14px] top-[580px] flex h-[28px] items-center text-[#565656]">
          <div className="mr-[10px] flex items-center whitespace-nowrap text-[25.5px] leading-none">
            <b className="w-[39px] origin-left scale-x-[0.880]">DPI</b>
            <span className="w-[52px]">缩放</span>
            <b className="w-[34px] origin-left scale-x-[0.940]">1.0</b>
          </div>
          <svg width="21" height="21" viewBox="0 0 21 21" className="mt-[5px]">
            <path d={gearPath(10.5, 10.5, 10, 7.2, 8)} fill="#a9b9e6" />
            <circle cx="10.500" cy="10.500" r="4.800" fill="#262626" />
          </svg>
        </div>
      </div>
      <div className="mt-[7px] flex h-[19px] shrink-0 gap-[2px] overflow-hidden pl-[5px]">
        <PanelTab
          label="时间轴"
          className="h-[26px] w-[187px] bg-[#2d2d2d] [&>div]:w-[27px]"
          icon={
            <svg width="20" height="18" viewBox="0 0 20 18">
              <path d="M0 4L17 1L19 3V5L1 8ZM1 10L18 7V9.500L2 13ZM2 14L19 11V15L3 18Z" fill="#b5c6e6" />
              <path d="M0 4L5 3L6 7L1 8Z" fill="#fff" />
            </svg>
          }
        />
        <PanelTab
          label="编译器结果"
          className="h-[26px] w-[187px] bg-[#3e3e3e] [&>div]:w-[27px]"
          icon={
            <svg width="19" height="20" viewBox="0 0 19 20">
              <path d="M2 1H16L18 20H0Z" fill="#b9c9ea" />
              <path d="M4 5L10 9L4.500 13" fill="none" stroke="#1c2947" strokeWidth="2.200" />
              <path d="M10 14H15" stroke="#1c2947" strokeWidth="2" />
            </svg>
          }
        />
      </div>
    </div>
  );
}

/* ---------- details panel ---------- */

function Tag() {
  return (
    <svg width="13" height="14" viewBox="0 0 13 14" className="shrink-0">
      <path d="M0.500 6.500L5.500 2.500H8V5.500H11V9L6 13.500Z" fill="#8f8f8f" />
      <path d="M10 0.500V6M7.300 3.200H12.700" stroke="#a8a8a8" strokeWidth="1.600" />
    </svg>
  );
}

function CheckBox({ tone, checked }: { tone: string; checked?: string }) {
  return (
    <div className={`flex h-[18px] w-[18px] shrink-0 items-center justify-center rounded-[2px] ${tone}`}>
      {checked && (
        <svg width="14" height="12" viewBox="0 0 14 12">
          <path d="M1.500 6.500L5 10L12.500 1.500" fill="none" stroke={checked} strokeWidth="3.200" />
        </svg>
      )}
    </div>
  );
}

function Bind() {
  return (
    <div className="flex h-[26px] w-[51px] shrink-0 items-center justify-center gap-[3px] rounded-[1px] border border-[#1c1c1c] bg-linear-to-b from-[#d6d6d6] to-[#a9a9a9]">
      <span className="text-[12.8px] leading-none text-black">绑定</span>
      <Caret w={10} h={6} />
    </div>
  );
}

function Combo({ label, className }: { label: string; className: string }) {
  return (
    <div className={`flex h-[23px] shrink-0 items-center justify-between rounded-[1px] border border-[#1c1c1c] pl-[6px] pr-[8px] ${className}`}>
      <span className="text-[13px] leading-none">{label}</span>
      <Caret className="" w={10} h={6} />
    </div>
  );
}

function NumberField({ axis, className }: { axis?: string; className: string }) {
  return (
    <div className={`flex h-5 shrink-0 items-center rounded-[4px] bg-[#d8d8d8] text-[13px] leading-none text-black ${className}`}>
      {axis && <span className="mr-[9px] w-[8px]">{axis}</span>}
      <span className="flex-1">0.0</span>
      <SpinIcon s={10} />
    </div>
  );
}

function SectionHeader({ label, className }: { label: string; className: string }) {
  return (
    <div className={`flex shrink-0 rounded-t-[3px] bg-[#2f2f2f] ${className}`}>
      <div className="flex w-[138px] items-center gap-[5px] border-r border-[#222] pl-[3px]">
        <Expanded />
        <span className={`text-[16.8px] leading-none text-[#e2e2e2] ${SHADOW}`}>{label}</span>
      </div>
    </div>
  );
}

function Row({
  label,
  className,
  tag,
  expand,
  dim,
  bind,
  children,
}: {
  label: string;
  className: string;
  tag?: boolean;
  expand?: boolean;
  dim?: boolean;
  bind?: boolean;
  children?: ReactNode;
}) {
  return (
    <div className={`flex shrink-0 ${className}`}>
      <div className="flex w-[138px] shrink-0 items-center border-r border-[#262626] pl-[4px] pr-[4px]">
        <div className="w-4 shrink-0">{expand && <Collapsed />}</div>
        <span className={`min-w-0 flex-1 overflow-hidden whitespace-nowrap text-[12.9px] leading-[16px] ${dim ? 'text-[#7a7a7a]' : 'text-[#dcdcdc]'}`}>
          {label}
        </span>
        {tag && (
          <div className="ml-[7px] flex shrink-0">
            <Tag />
          </div>
        )}
      </div>
      <div className="flex w-[204px] shrink-0 items-center pl-[4px]">{children}</div>
      <div className="flex items-center">{bind && <Bind />}</div>
    </div>
  );
}

function Spacer({ className }: { className: string }) {
  return (
    <div className={`shrink-0 ${className}`}>
      <div className="h-full w-[138px] border-r border-[#262626]" />
    </div>
  );
}

function Details() {
  return (
    <div className="flex w-[420px] shrink-0 flex-col">
      <div className="flex h-[29px] shrink-0 pl-[5px]">
        <PanelTab
          label="细节"
          className="bg-[#3e3e3e]"
          icon={
            <svg width="22" height="21" viewBox="0 0 22 21">
              <path d="M13 13L20 19.500" stroke="#4a62a8" strokeWidth="4" strokeLinecap="round" />
              <circle cx="9" cy="9" r="8" fill="#55678f" stroke="#7f94c8" strokeWidth="1.500" />
              <path d="M9.500 3.500V5.800M7 8H9.800V13.500M6.500 13.500H12" stroke="#fff" strokeWidth="2" fill="none" />
            </svg>
          }
        />
      </div>
      <div className="flex h-[586px] flex-col overflow-hidden bg-[#3e3e3e]">
        <div className="flex h-[47px] shrink-0 items-center pl-[10px]">
          <div className="mr-[4px] h-[10px] w-5 rounded-[4px] border-[1.5px] border-[#e4e4e4] bg-[#7c7c7c]">
            <div className="h-full w-2 rounded-l-[2px] bg-white" />
          </div>
          <div className="flex h-[23px] w-[250px] items-center rounded-[4px] bg-[#d8d8d8] pl-[6px] text-[15.3px] leading-none tracking-[0.2px] text-black">
            EnemyBlood
          </div>
          <div className="ml-2">
            <CheckBox tone="bg-[#d9d9d9]" checked="#777777" />
          </div>
          <span className="ml-[5px] w-[94px] whitespace-nowrap text-[14.6px] leading-none tracking-[0.2px] text-[#d8d8d8]">Is Variable</span>
          <div className="w-[11px] shrink-0 overflow-hidden whitespace-nowrap border-b border-dotted border-[#ddd] pb-[3px] text-[16.800px] leading-[17px] text-[#dcdcdc]">
            打开
          </div>
        </div>
        <div className="flex h-7 shrink-0 items-center pl-[5px] pb-[1px]">
          <SearchBox label="搜索详情" className="w-[322px]" />
          <div className="ml-[11px] flex h-[28px] w-[33px] items-center justify-center rounded-[1px] border border-[#888] bg-linear-to-b from-[#c2c2c2] to-[#8c8c8c]">
            <svg width="17" height="19" viewBox="0 0 17 19">
              <path d="M0 1.500H5M6 1.500H11M12 1.500H17M0 5.500H5M6 5.500H11M12 5.500H17M0 9.500H5M6 9.500H11M12 9.500H17M0 13.500H5M6 13.500H11M12 13.500H17M0 17.500H5M6 17.500H11M12 17.500H17" stroke="#6c6c6c" strokeWidth="2.200" />
            </svg>
          </div>
          <svg width="22" height="14" viewBox="0 0 22 14" className="ml-[6px]">
            <path d="M0 7Q11 -6 22 7Q11 19 0 7Z" fill="#cfcfcf" />
            <circle cx="11" cy="7" r="4.800" fill="#7285b5" />
            <circle cx="11" cy="6" r="1.800" fill="#e8ecf6" />
          </svg>
          <Caret className="ml-[3px] text-[#b4b4b4]" w={11} h={6} />
        </div>
        <div className="flex flex-1 pl-[3px]">
          <div className="relative flex w-[414px] flex-col">
            <div className="h-[18px] shrink-0 overflow-hidden">
              <div className="-mt-[18px]">
                <SectionHeader label="进度" className="h-[36px] [&>div]:pb-[2px]" />
              </div>
            </div>
            <Row label="百分比" tag bind className="h-[28px]">
              <NumberField className="w-[131px] pl-[6px] pr-[8px]" />
            </Row>
            <Row label="条填充类型" className="h-[31px]">
              <Combo label="左到右" className="ml-px w-[129px] bg-linear-to-b from-[#d2d2d2] to-[#a6a6a6] text-black" />
            </Row>
            <Row label="为边框" tag className="h-[29px]">
              <div className="pl-px">
                <CheckBox tone="bg-[#a9a9a9]" />
              </div>
            </Row>
            <Row label="边缘填充" expand className="h-[31px]">
              <NumberField axis="X" className="w-[113px] pl-[4px] pr-[7px]" />
              <NumberField axis="Y" className="ml-[4px] w-[113px] pl-[4px] pr-[7px]" />
            </Row>
            <Spacer className="h-[17px]" />
            <SectionHeader label="可访问性" className="h-[36px] [&>div]:pb-px" />
            <Row label="重载可访问默认值" className="h-[28px]">
              <div className="pl-px">
                <CheckBox tone="bg-[#a9a9a9]" />
              </div>
            </Row>
            <Row label="可访问子项" dim className="h-[30px]">
              <div className="pl-px">
                <CheckBox tone="bg-[#828282]" checked="#505050" />
              </div>
            </Row>
            <Row label="可访问行为" dim className="h-[32px]">
              <Combo label="不可访问" className="ml-px w-[80px] border-[#2e2e2e] bg-[#7d7d7d] text-[#222]" />
            </Row>
            <div className="h-[5px] shrink-0 border-b border-[#383838]" />
            <div className="flex h-4 shrink-0 items-center justify-center bg-[#464646] pr-[20px]">
              <svg width="12" height="9" viewBox="0 0 12 9">
                <path d="M0 0H12V1.500H0ZM0 2.500H12L7 8.500H5Z" fill="#dcdcdc" />
              </svg>
            </div>
            <SectionHeader label="外观" className="h-[37px]" />
            <Row label="填充颜色和不透明度" expand tag bind className="h-[27px]">
              <div className="h-4 w-[176px] bg-[#c30f00]" />
              <svg width="10" height="11" viewBox="0 0 10 11" className="ml-[5px]">
                <path d="M3.500 0.500L1 3L3.500 5.500M1 3H8.800V9.500H3" fill="none" stroke="#b9bd35" strokeWidth="1.500" />
              </svg>
            </Row>
            <Spacer className="h-[18px]" />
            <SectionHeader label="行为" className="h-[36px] [&>div]:pb-px" />
            <Row label="工具提示文本" bind className="h-[28px]">
              <div className="h-[22px] w-[151px] rounded-[4px] bg-[#d8d8d8]" />
              <Caret className="ml-2 text-[#b4b4b4]" w={10} h={6} />
            </Row>
            <Row label="已启用" tag bind className="h-[29px]">
              <div className="pl-px">
                <CheckBox tone="bg-[#d9d9d9]" checked="#777777" />
              </div>
            </Row>
            <Row label="可视性" tag bind className="h-[31px]">
              <Combo label="可视" className="ml-px w-[129px] bg-linear-to-b from-[#d2d2d2] to-[#a6a6a6] text-black" />
            </Row>
            <div className="absolute right-0 top-0 flex h-[508px] w-[20px] flex-col items-center pr-px">
              <div className="h-[118px] w-px shrink-0 bg-[#565656]" />
              <div className="h-[193px] w-[14px] shrink-0 rounded-[1px] border border-[#222] bg-white" />
              <div className="w-px flex-1 bg-[#565656]" />
            </div>
          </div>
        </div>
      </div>
    </div>
  );
}

export default function App() {
  return (
    <div className="flex h-[785px] w-[1920px] flex-col overflow-hidden bg-[#212121] font-['Roboto','Noto_Sans_CJK_SC',sans-serif]">
      <TitleBar />
      <MenuBar />
      <Toolbar />
      <div className="flex gap-[7px] pl-px pt-[6px]">
        <LeftColumn />
        <Designer />
        <Details />
      </div>
    </div>
  );
}
